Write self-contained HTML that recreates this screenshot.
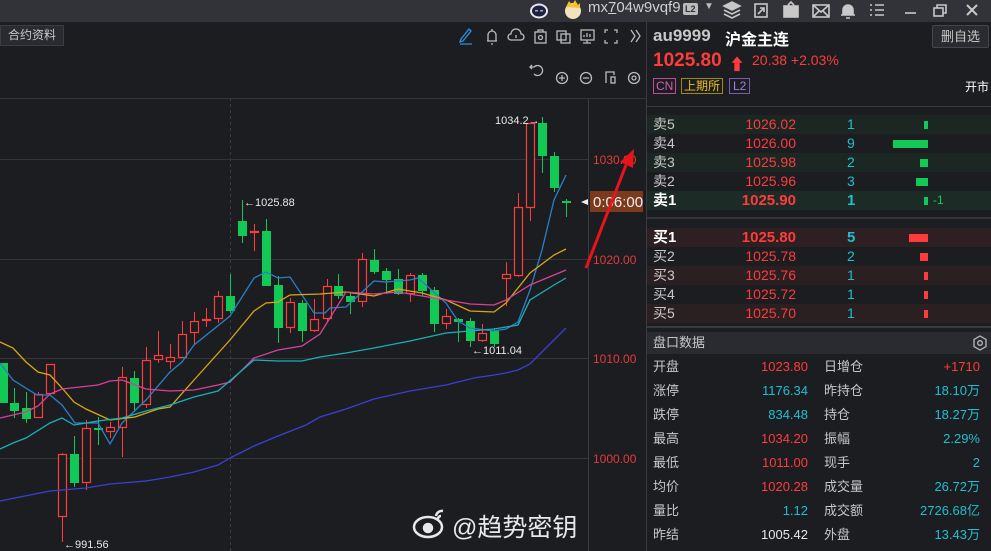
<!DOCTYPE html>
<html><head><meta charset="utf-8">
<style>
*{margin:0;padding:0;box-sizing:border-box}
body{width:991px;height:551px;overflow:hidden;background:#1c1d21;font-family:"Liberation Sans","Noto Sans CJK SC",sans-serif;color:#c8c8c8;position:relative}
.top{position:absolute;left:0;top:0;width:991px;height:22px;background:#323338}
.abs{position:absolute;white-space:nowrap}
.rp{position:absolute;left:646px;top:22px;width:345px;height:529px;background:#1c1d21;border-left:1px solid #3a3b40}
.row{position:absolute;left:0;width:345px;height:19px;font-size:14px;line-height:19px}
.row span{position:absolute}
.red{color:#ff3b3b}.cy{color:#1fbfcf}.wh{color:#e8e8e8}
</style></head><body>
<div class="top"></div>
<svg class="abs" style="left:529px;top:2px" width="20" height="18"><ellipse cx="10" cy="9" rx="9" ry="7.5" fill="#e8e8f0"/><ellipse cx="10" cy="9" rx="7" ry="5.5" fill="#1e2040"/><rect x="6" y="8" width="3" height="1.5" fill="#aab"/><rect x="11" y="8" width="3" height="1.5" fill="#aab"/></svg>
<svg class="abs" style="left:562px;top:0px" width="22" height="20"><circle cx="11" cy="11" r="8" fill="#f3e2c0"/><path d="M4 7 L7 1 L10 5 L13 0 L16 5 L18 3 L18 8 Z" fill="#f2c230"/></svg>
<div class="abs" style="left:588px;top:-1px;font-size:15px;color:#cfcfcf">mx<u>7</u>04w9vqf9</div>
<div class="abs" style="left:683px;top:3px;background:#bbb;color:#333;font-size:9px;font-weight:bold;padding:0 2px;border-radius:2px;line-height:12px">L2</div>
<div class="abs" style="left:704px;top:1px;font-size:10px;color:#bbb">▼</div>
<svg class="abs" style="left:720px;top:0" width="271" height="22" fill="none" stroke="#c8c8c8" stroke-width="1.6">
<path d="M4 6 L12 2 L20 6 L12 10 Z" fill="#c8c8c8"/><path d="M4 10 L12 14 L20 10 M4 14 L12 18 L20 14"/>
<rect x="35" y="4" width="12" height="13"/><path d="M38 14 L44 8 M40 8 h4 v4"/>
<rect x="64" y="6" width="14" height="11" fill="#c8c8c8"/><path d="M68 5 l3 -3 l3 3" />
<rect x="93" y="5" width="16" height="12"/><path d="M93 5 L101 12 L109 5 M93 17 L99 11 M109 17 L103 11"/>
<path d="M121 15 h14 M123 15 v-5 a5 5 0 0 1 10 0 v5 M126 18 h4" fill="#c8c8c8"/>
<path d="M150 5 h2 M150 10 h2 M150 15 h2 M155 5 h9 M155 10 h9 M155 15 h9"/>
<path d="M185 13 h11"/>
<rect x="214" y="8" width="9" height="8"/><path d="M217 8 v-3 h9 v8 h-3"/>
<path d="M247 5 L257 15 M257 5 L247 15" stroke-width="2"/>
</svg>

<div class="abs" style="left:0;top:25px;width:64px;height:21px;background:#2a2b30;border:1px solid #3c3d42;font-size:12px;line-height:19px;padding-left:7px;color:#c8c8c8">合约资料</div>
<svg class="abs" style="left:455px;top:24px" width="190" height="60" fill="none" stroke="#bbb" stroke-width="1.3">
<path d="M6 15 L14 5 L16 7 L8 17 L5 18 Z M5 20 h12" stroke="#2d8fe0"/>
<path d="M32 17 h10 M33 17 v-6 a4 4 0 0 1 8 0 v6 M36 20 h2 M37 5 v2"/>
<path d="M56 16 h10 a3 3 0 0 0 0-6 a5 5 0 0 0 -10 0 a3 3 0 0 0 0 6 Z M61 11 v3"/>
<rect x="80" y="8" width="11" height="11"/><circle cx="85.5" cy="13.5" r="2"/><path d="M83 8 v-2 h5 v2"/>
<rect x="102" y="7" width="9" height="9"/><rect x="106" y="10" width="9" height="9"/>
<rect x="126" y="6" width="13" height="10"/><path d="M132 16 v3 M128 19 h8 M129 13 v-2 M132 13 v-4 M135 13 v-3"/>
<path d="M150 9 v-3 h3 M159 6 h3 v3 M162 16 v3 h-3 M153 19 h-3 v-3"/>
<path d="M176 6 l4 6 l-4 6 M181 6 l4 6 l-4 6"/>
<path d="M79 50 a5 5 0 1 0 0 -7 h-4 M77 41 l-2 2 l2 2"/>
<circle cx="107" cy="54" r="5.5"/><path d="M104 54 h6 M107 51 v6"/>
<circle cx="131" cy="54" r="5.5"/><path d="M128 54 h6"/>
<path d="M151 59 v-11 h8 v3"/><rect x="156" y="53" width="4" height="6"/>
<circle cx="179" cy="54" r="5.5"/><circle cx="179" cy="54" r="2"/>
</svg>

<svg id="ch" class="abs" style="left:0;top:0" width="646" height="551">
<line x1="0" y1="98.5" x2="646" y2="98.5" stroke="#34353a"/>
<line x1="588.5" y1="98" x2="588.5" y2="551" stroke="#3a3b40"/>
<line x1="230.5" y1="98" x2="230.5" y2="551" stroke="#3a3b40" stroke-dasharray="3,3"/>
<g stroke="#34353a"><line x1="0" y1="159.5" x2="588" y2="159.5"/><line x1="0" y1="259.5" x2="588" y2="259.5"/><line x1="0" y1="358.5" x2="588" y2="358.5"/><line x1="0" y1="458.5" x2="588" y2="458.5"/></g>
<g fill="#e23b3b" font-size="12" font-family="Liberation Sans"><text x="593" y="164">1030.00</text><text x="593" y="264">1020.00</text><text x="593" y="363">1010.00</text><text x="593" y="463">1000.00</text></g>
<g id="cs"></g>
<g font-size="11" fill="#e8e8e8" font-family="Liberation Sans"><text x="244" y="206">←1025.88</text><text x="495" y="124">1034.2→</text><text x="472" y="354">←1011.04</text><text x="64" y="548">←991.56</text></g>
<path d="M581 202 l7 -3 v6 z" fill="#eee"/>
<rect x="590" y="191" width="53" height="21" fill="#7b3a1c"/>
<text x="593" y="207" font-size="15" fill="#f0f0f0" font-family="Liberation Sans">0:06:00</text>
<path d="M586 268 L626 165" stroke="#e8141c" stroke-width="3"/>
<path d="M634 149 L620 162 L633 168 Z" fill="#e8141c"/>
<text x="452" y="536" font-size="25" fill="#ffffff" font-family="Liberation Sans,Noto Sans CJK SC,sans-serif" opacity="0.9">@趋势密钥</text>
<g fill="none" stroke="#fff" stroke-width="2.5" opacity="0.9"><ellipse cx="428" cy="527" rx="14" ry="10"/><circle cx="428" cy="528" r="4" fill="#fff"/><path d="M436 516 a6 6 0 0 1 7 -5 M438 519 a3 3 0 0 1 3 -3"/></g>
</svg>

<div class="rp">
<div class="abs" style="left:6px;top:4px;font-size:17px;font-weight:bold;color:#c8c8c8">au9999</div>
<div class="abs" style="left:78px;top:4px;font-size:16px;font-weight:bold;color:#fff">沪金主连</div>
<div class="abs" style="left:285px;top:3px;width:57px;height:23px;border:1px solid #45464b;background:#2a2b30;border-radius:2px;font-size:13px;line-height:21px;text-align:center;color:#c8c8c8">删自选</div>
<div class="abs" style="left:6px;top:28px;font-size:19px;font-weight:bold;color:#ff3b3b">1025.80</div>
<div class="abs" style="left:82px;top:29px;font-size:16px;color:#ff3b3b">⬆</div>
<div class="abs" style="left:105px;top:30px;font-size:14px;color:#ff3b3b">20.38 +2.03%</div>
<div class="abs" style="left:6px;top:56px;font-size:12px;border:1px solid #c04a9a;color:#d060b0;padding:0 2px;line-height:14px">CN</div>
<div class="abs" style="left:34px;top:56px;font-size:12px;border:1px solid #a08a10;color:#e8c020;padding:0 2px;line-height:14px">上期所</div>
<div class="abs" style="left:82px;top:56px;font-size:12px;border:1px solid #7a5ab0;color:#a080e0;padding:0 3px;line-height:14px">L2</div>
<div class="abs" style="left:318px;top:56px;font-size:12px;color:#fff">开市</div>
<div class="abs" style="left:0;top:84px;width:345px;height:1px;background:#3a3b40"></div>
<div id="book"></div>
<div class="abs" style="left:0;top:195px;width:345px;height:2px;background:#34353a"></div>
<div class="abs" style="left:0;top:304px;width:345px;height:2px;background:#3a3b40"></div>
<div class="abs" style="left:0;top:310px;width:345px;height:22px;background:#2a2b30;font-size:13px;line-height:22px;padding-left:6px">盘口数据</div>
<svg class="abs" style="left:325px;top:313px" width="16" height="16" fill="none" stroke="#bbb" stroke-width="1.3"><path d="M8 1 L14 4.5 V11.5 L8 15 L2 11.5 V4.5 Z"/><circle cx="8" cy="8" r="2.3"/></svg>
<div id="stats"></div>
</div>

<script>
var s='',C=[
[3,363,403,363,403,0],[14,403,411,388,418,0],[26,408,419,392,423,0],[38,394,418,392,418,1],[50,364,394,364,394,1],[62,454,517,453,542,1],[74,454,483,436,487,0],[86,428,483,420,490,1],[98,428,430,417,445,0],[110,427,432,422,438,1],[122,377,428,367,457,1],[134,378,403,371,412,0],[146,360,405,347,408,1],[158,355,360,331,363,1],[170,357,362,344,369,1],[182,334,358,321,358,1],[194,321,333,312,344,1],[206,319,321,308,327,1],[218,296,319,291,323,1],[230,296,311,274,313,0],[242,221,236,200,243,0],[254,231,233,224,251,1],[266,231,286,219,286,0],[278,285,328,276,343,0],[290,302,328,298,333,1],[302,303,331,300,342,0],[314,319,331,299,332,1],[327,286,319,279,322,1],[338,286,296,274,299,0],[350,296,302,293,314,0],[362,259,302,253,307,1],[374,260,272,249,274,0],[386,271,280,268,294,0],[398,279,294,269,295,0],[410,275,294,273,302,1],[422,275,291,273,296,0],[434,290,324,287,332,0],[446,316,324,309,329,1],[458,319,322,318,342,0],[470,321,341,318,347,0],[482,333,341,324,342,1],[494,331,344,328,347,0],[506,274,279,262,306,1],[518,207,276,193,277,1],[530,123,208,123,221,1],[542,123,156,117,173,0],[554,156,188,152,192,0],[566,201,203,199,217,0]];
C.forEach(function(c){var col=c[5]?'#ff3b3b':'#12c955',x=c[0],h=Math.max(c[2]-c[1],2);
s+='<line x1="'+(x+.5)+'" y1="'+c[3]+'" x2="'+(x+.5)+'" y2="'+c[4]+'" stroke="'+col+'"/>';
if(c[5])s+='<rect x="'+(x-3.5)+'" y="'+(c[1]+.5)+'" width="8" height="'+(h-1)+'" fill="#1c1d21" stroke="'+col+'" stroke-width="1.2"/>';
else s+='<rect x="'+(x-4)+'" y="'+c[1]+'" width="9" height="'+h+'" fill="'+col+'"/>';});
function L(p,c){s+='<polyline fill="none" stroke="'+c+'" stroke-width="1.3" points="'+p+'"/>';}
L('0,363 13,380 37,395 50,395 62,405 75,423 98,423 110,444 122,423 146,400 170,372 182,362 194,345 230,316 254,278 266,272 278,278 290,277 314,313 325,313 330,308 346,307 374,281 386,282 410,280 418,278 446,303 458,321 470,328 494,331 506,329 518,322 530,290 542,250 554,200 566,175','#2a7fc8');
L('0,342 13,348 26,362 38,372 50,375 62,388 74,402 86,409 110,420 135,417 158,409 170,407 194,380 230,340 254,311 266,303 278,302 290,295 320,294 346,292 374,296 398,289 422,293 446,300 470,311 494,312 506,303 530,273 554,255 566,249','#d8a810');
L('0,418 26,412 38,406 50,394 62,389 98,385 110,381 122,380 146,389 170,391 194,390 218,385 230,382 254,358 278,350 302,346 320,334 346,292 374,294 398,292 446,300 470,304 494,305 506,300 530,285 554,275 566,270','#d8409a');
L('0,449 13,443 26,438 50,423 62,418 74,425 86,423 98,421 122,418 146,411 170,405 194,397 218,391 254,360 278,361 302,361 320,357 346,353 374,348 410,341 446,333 470,331 494,329 506,327 518,325 530,300 554,285 566,278','#18b0b8');
L('0,501 25,496 50,491 62,490 86,488 110,484 146,481 170,477 194,472 218,465 230,458 254,446 278,436 306,425 320,417 346,409 374,399 410,391 446,385 474,378 494,375 506,373 518,370 530,364 566,328','#3a40d0');
document.getElementById('cs').innerHTML=s;
var B=[['卖5','1026.02','1',4,'#1c2724'],['卖4','1026.00','9',35,'#1c1d21'],['卖3','1025.98','2',8,'#1c2724'],['卖2','1025.96','3',12,'#1c1d21'],['卖1','1025.90','1',4,'#1d2b26']],A=[['买1','1025.80','5',19,'#2e2022'],['买2','1025.78','2',8,'#1c1d21'],['买3','1025.76','1',4,'#2a1f21'],['买4','1025.72','1',4,'#1c1d21'],['买5','1025.70','1',4,'#2a1f21']],h='';
function R(r,y,g,b){var f=b?'font-weight:bold;font-size:15px;':'';
h+='<div class="row" style="top:'+y+'px;background:'+r[4]+'"><span style="left:6px;'+f+'color:'+(b?'#fff':'#c8c8c8')+'">'+r[0]+'</span><span class="red" style="right:196px;'+f+'">'+r[1]+'</span><span class="cy" style="left:200px;'+f+'">'+r[2]+'</span><span style="left:'+(281-r[3])+'px;top:6px;width:'+r[3]+'px;height:8px;background:'+(g?'#12c955':'#ff3b3b')+'"></span>'+(b&&g?'<span style="left:286px;font-size:12px;color:#12c955">-1</span>':'')+'</div>';}
B.forEach(function(r,i){R(r,93+i*19,1,i==4)});
A.forEach(function(r,i){R(r,206+i*19,0,i==0)});
document.getElementById('book').innerHTML=h;
var S=[['开盘','1023.80','red','日增仓','+1710','red'],['涨停','1176.34','cy','昨持仓','18.10万','cy'],['跌停','834.48','cy','持仓','18.27万','cy'],['最高','1034.20','red','振幅','2.29%','cy'],['最低','1011.00','red','现手','2','cy'],['均价','1020.28','red','成交量','26.72万','cy'],['量比','1.12','cy','成交额','2726.68亿','cy'],['昨结','1005.42','wh','外盘','13.43万','cy']];h='';
S.forEach(function(r,i){h+='<div class="row" style="top:'+(333+i*24)+'px;height:24px;line-height:24px;font-size:13px"><span style="left:6px">'+r[0]+'</span><span class="'+r[2]+'" style="right:184px">'+r[1]+'</span><span style="left:177px">'+r[3]+'</span><span class="'+r[5]+'" style="right:12px">'+r[4]+'</span></div>';});
document.getElementById('stats').innerHTML=h;
</script>
</body></html>
